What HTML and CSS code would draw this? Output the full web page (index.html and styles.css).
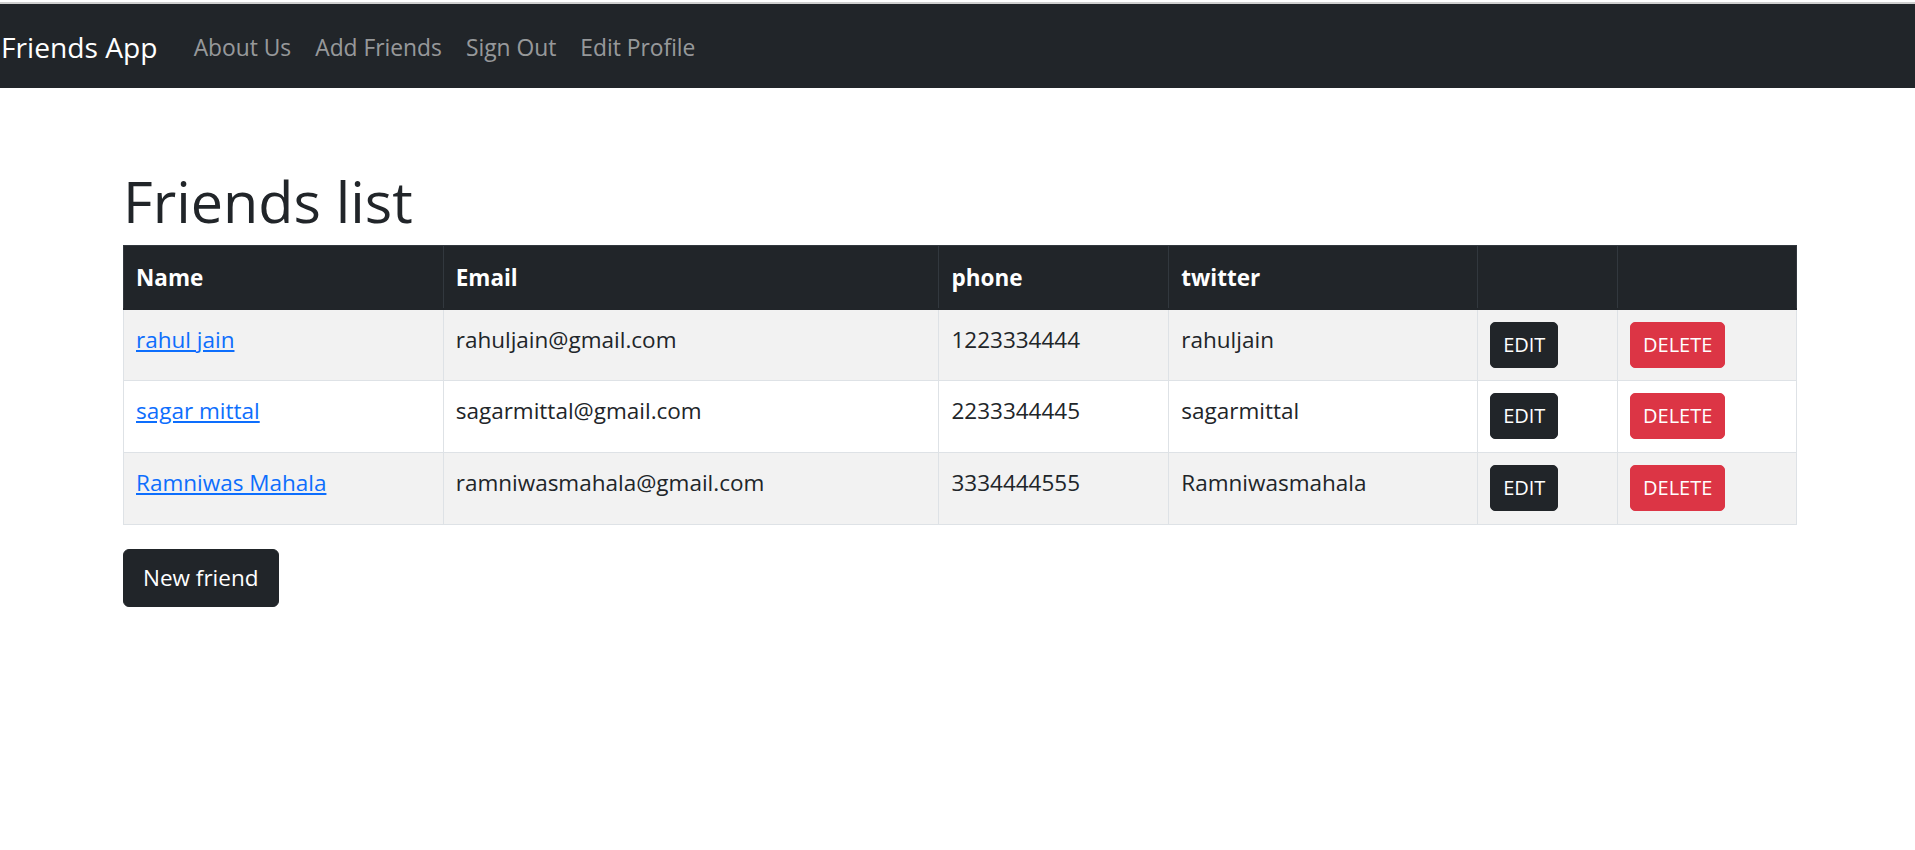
FILE: index.html
```html
<!DOCTYPE html>
<html lang="en">
<head>
<meta charset="utf-8">
<title>Friends App</title>
<link rel="stylesheet" href="styles.css">
</head>
<body>
<div class="chrome-line"></div>
<nav class="navbar">
  <a class="brand" href="#">Friends App</a>
  <ul class="nav">
    <li><a class="nav-link" href="#">About Us</a></li>
    <li><a class="nav-link" href="#">Add Friends</a></li>
    <li><a class="nav-link" href="#">Sign Out</a></li>
    <li><a class="nav-link" href="#">Edit Profile</a></li>
  </ul>
</nav>
<main class="container">
  <h1 class="title">Friends list</h1>
  <table class="friends">
    <thead>
      <tr>
        <th class="c-name">Name</th>
        <th class="c-email">Email</th>
        <th class="c-phone">phone</th>
        <th class="c-twitter">twitter</th>
        <th class="c-edit"></th>
        <th class="c-delete"></th>
      </tr>
    </thead>
    <tbody>
      <tr>
        <td><a class="link" href="#">rahul jain</a></td>
        <td>rahuljain@gmail.com</td>
        <td>1223334444</td>
        <td>rahuljain</td>
        <td><a class="btn btn-sm btn-dark" href="#">EDIT</a></td>
        <td><a class="btn btn-sm btn-danger" href="#">DELETE</a></td>
      </tr>
      <tr>
        <td><a class="link" href="#">sagar mittal</a></td>
        <td>sagarmittal@gmail.com</td>
        <td>2233344445</td>
        <td>sagarmittal</td>
        <td><a class="btn btn-sm btn-dark" href="#">EDIT</a></td>
        <td><a class="btn btn-sm btn-danger" href="#">DELETE</a></td>
      </tr>
      <tr>
        <td><a class="link" href="#">Ramniwas Mahala</a></td>
        <td>ramniwasmahala@gmail.com</td>
        <td>3334444555</td>
        <td>Ramniwasmahala</td>
        <td><a class="btn btn-sm btn-dark" href="#">EDIT</a></td>
        <td><a class="btn btn-sm btn-danger" href="#">DELETE</a></td>
      </tr>
    </tbody>
  </table>
  <a class="btn btn-dark btn-new" href="#">New friend</a>
</main>
</body>
</html>
```
FILE: styles.css
```css
* { box-sizing: border-box; }

html, body {
  margin: 0;
  padding: 0;
  background: #fff;
}

body {
  font-family: "Open Sans", "Liberation Sans", sans-serif;
  font-size: 22.5px;
  line-height: 36px;
  color: #212529;
}

.chrome-line {
  height: 2px;
  margin-top: 2px;
  background: #cfcfcf;
}

.navbar {
  display: flex;
  align-items: center;
  height: 84px;
  padding: 12px 0;
  background: #212529;
}

.brand {
  font-size: 28.2px;
  line-height: 45px;
  padding: 8px 0 6px;
  margin-left: 1px;
  margin-right: 24px;
  color: #fff;
  text-decoration: none;
}

.nav {
  display: flex;
  list-style: none;
  margin: 0;
  padding: 0;
}

.nav-link {
  display: block;
  padding: 14px 12px 10px;
  font-size: 22.8px;
  line-height: 36px;
  color: rgba(255, 255, 255, 0.55);
  text-decoration: none;
}

.container {
  width: 1674px;
  margin-left: 123px;
}

.title {
  font-size: 57.5px;
  font-weight: 500;
  line-height: 72px;
  margin: 77px 0 8px;
}

.friends {
  width: 1674px;
  border-collapse: collapse;
  margin-bottom: 24px;
  vertical-align: top;
}

.friends th,
.friends td {
  padding: 12px 12px;
  text-align: left;
  vertical-align: top;
  line-height: 36px;
  border: 1px solid #dee2e6;
}

.friends thead th {
  background: #212529;
  color: #fff;
  font-weight: 700;
  border-color: #32383e;
  height: 63px;
  padding: 14px 12px 10px;
}

.friends tbody {
  border-top: 2px solid #212529;
}

.friends tbody tr:nth-child(odd) td {
  background: #f2f2f2;
}

.friends tbody td {
  height: 72px;
}

.c-name { width: 320px; }
.c-email { width: 496px; }
.c-phone { width: 230px; }
.c-twitter { width: 309px; }
.c-edit { width: 140px; }
.c-delete { width: 179px; }

.link {
  color: #0d6efd;
  text-decoration: underline;
}

.btn {
  display: inline-block;
  border: 1px solid transparent;
  color: #fff;
  text-decoration: none;
  text-align: center;
  vertical-align: middle;
}

.btn-sm {
  font-size: 20px;
  line-height: 32px;
  padding: 6px 12px;
  border-radius: 5px;
}

.btn-dark {
  background: #212529;
  border-color: #212529;
}

.btn-danger {
  background: #dc3545;
  border-color: #dc3545;
}

.btn-new {
  font-size: 22.5px;
  line-height: 36px;
  padding: 10px 19px;
  border-radius: 6px;
}
```
